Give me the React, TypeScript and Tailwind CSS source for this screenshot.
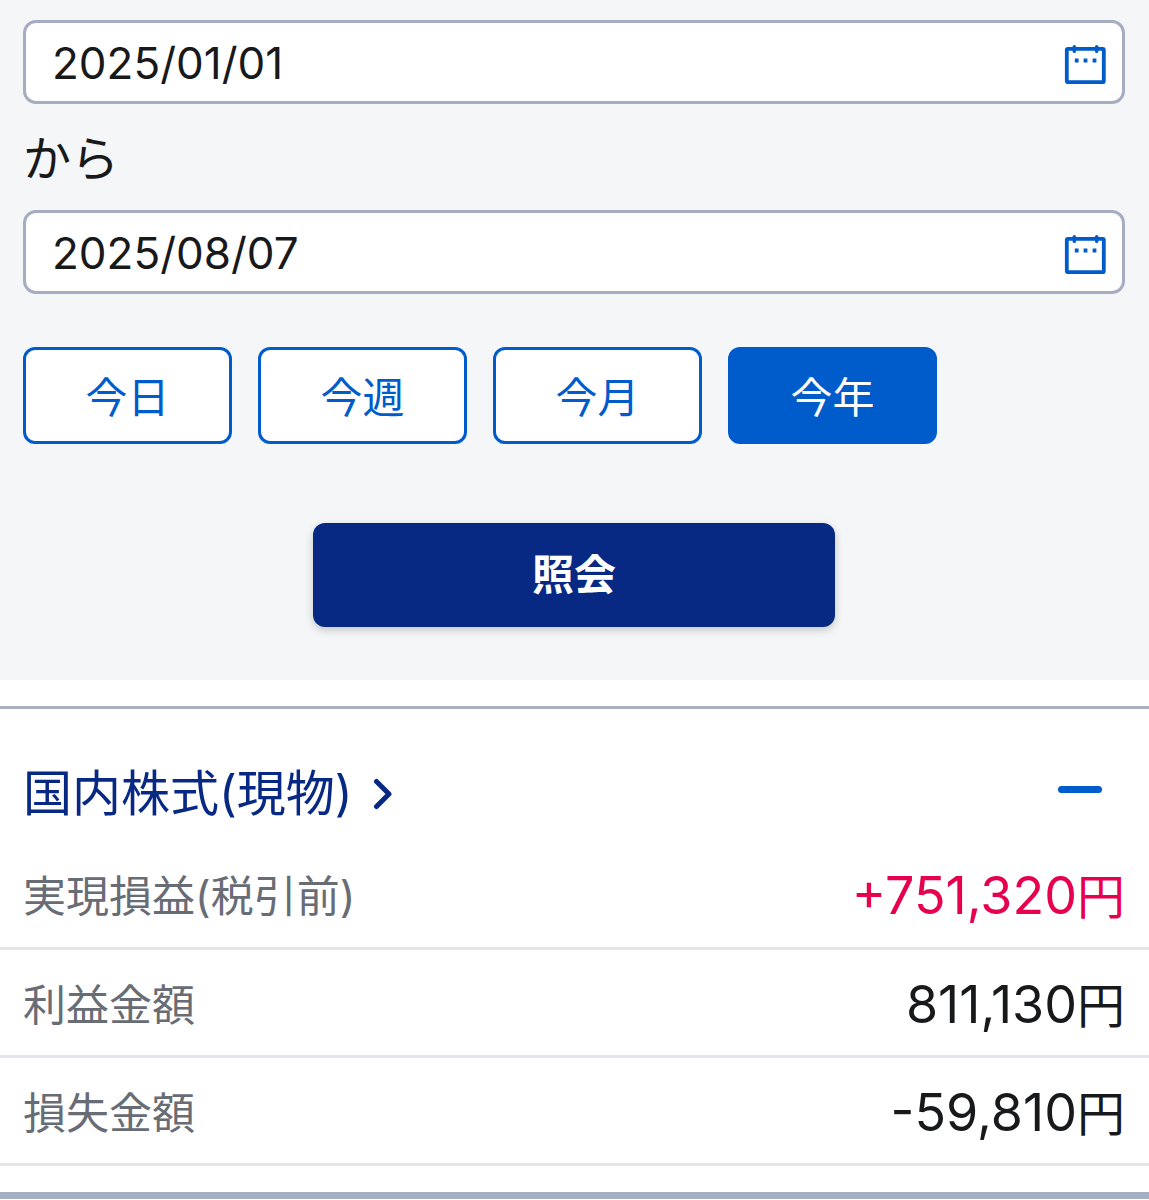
import { useState } from "react";

function CalendarIcon() {
  return (
    <svg viewBox="0 0 42 40" className="h-[40px] w-[42px]" fill="none" aria-hidden="true">
      <rect x="2.8" y="4.8" width="37" height="33.4" rx="1" stroke="#005bcb" strokeWidth="3.8" />
      <path d="M10.3 2.6v4.8M32.7 2.6v4.8" stroke="#005bcb" strokeWidth="3.4" strokeLinecap="round" />
      <path d="M10.8 16.5h3.8M19.6 16.5h3.8M28.6 16.5h3.8" stroke="#005bcb" strokeWidth="3.8" />
    </svg>
  );
}

type DateFieldProps = {
  label: string;
  value: string;
  onChange: (value: string) => void;
};

function DateField({ label, value, onChange }: DateFieldProps) {
  return (
    <div className="flex h-[84px] items-center rounded-[13px] border-3 border-[#a6adc2] bg-white pr-4 pl-[26px]">
      <input
        type="text"
        aria-label={label}
        value={value}
        onChange={(e) => onChange(e.target.value)}
        className="h-full min-w-0 flex-1 bg-transparent pt-px text-[44px] outline-none"
      />
      <button type="button" aria-label={`${label}をカレンダーで選択`} className="shrink-0 pt-1">
        <CalendarIcon />
      </button>
    </div>
  );
}

const periods = [
  { label: "今日", from: "2025/08/07" },
  { label: "今週", from: "2025/08/03" },
  { label: "今月", from: "2025/08/01" },
  { label: "今年", from: "2025/01/01" },
];

const rows = [
  { label: "実現損益(税引前)", amount: "+751,320", color: "text-[#e6004f]" },
  { label: "利益金額", amount: "811,130", color: "text-[#18191b]" },
  { label: "損失金額", amount: "-59,810", color: "text-[#18191b]" },
];

export default function App() {
  const [from, setFrom] = useState("2025/01/01");
  const [to, setTo] = useState("2025/08/07");
  const [period, setPeriod] = useState("今年");
  const [open, setOpen] = useState(true);

  return (
    <main className="min-h-screen bg-white font-[Inter,'Noto_Sans_CJK_JP',sans-serif] text-[#18191b]">
      <form
        className="bg-[#f4f6f8] pt-5 pr-6 pb-[53px] pl-[23px]"
        onSubmit={(e) => e.preventDefault()}
      >
        <DateField label="開始日" value={from} onChange={setFrom} />
        <p className="pt-[19px] pb-[15px] text-[48px] leading-[72px]">から</p>
        <DateField label="終了日" value={to} onChange={setTo} />

        <div className="mt-[53px] flex flex-wrap gap-[26px]">
          {periods.map((p) => (
            <button
              key={p.label}
              type="button"
              aria-pressed={p.label === period}
              onClick={() => {
                setPeriod(p.label);
                setFrom(p.from);
              }}
              className={`h-[97px] w-[209px] rounded-xl border-3 border-[#005bcb] pt-1 text-[42px] leading-[60px] ${
                p.label === period ? "bg-[#005bcb] text-white" : "bg-white text-[#005bcb]"
              }`}
            >
              {p.label}
            </button>
          ))}
        </div>

        <button
          type="submit"
          className="mx-auto mt-[79px] block h-[104px] w-[522px] max-w-full rounded-xl bg-[#072984] text-[42px] leading-[60px] font-bold text-white shadow-[0_3px_8px_rgba(0,0,0,0.2)]"
        >
          照会
        </button>
      </form>

      <section className="mt-[26px] border-t-3 border-b-[7px] border-t-[#aab1c0] border-b-[#a6afc1] pb-[26px]">
        <header className="flex items-start justify-between px-[23px] pt-[49px] pb-[10px]">
          <h2 className="text-[49px] leading-[72px] text-[#072984]">
            <a href="#domestic" className="flex items-center gap-5">
              国内株式(現物)
              <svg viewBox="0 0 20 34" className="h-[34px] w-5" fill="none" aria-hidden="true">
                <path
                  d="M3.5 4.5l12.5 12.5L3.5 29.5"
                  stroke="#072984"
                  strokeWidth="5"
                  strokeLinecap="round"
                  strokeLinejoin="round"
                />
              </svg>
            </a>
          </h2>
          <button
            type="button"
            aria-expanded={open}
            aria-label="国内株式(現物)の明細"
            onClick={() => setOpen(!open)}
            className="mr-6 flex h-[62px] w-11 items-center justify-center"
          >
            <span className="h-[7px] w-full rounded-full bg-[#005bcb]" />
          </button>
        </header>

        {open && (
          <table className="w-full border-collapse">
            <tbody>
              {rows.map((row) => (
                <tr key={row.label} className="h-[108px] border-b-3 border-[#e3e5eb]">
                  <th
                    scope="row"
                    className="pt-1.5 pl-[23px] text-left text-[43px] leading-[60px] font-normal text-[#686c75]"
                  >
                    {row.label}
                  </th>
                  <td className={`pt-1.5 pr-6 text-right text-[52px] leading-[72px] ${row.color}`}>
                    {row.amount}
                    <span className="text-[48px]">円</span>
                  </td>
                </tr>
              ))}
            </tbody>
          </table>
        )}
      </section>
    </main>
  );
}
